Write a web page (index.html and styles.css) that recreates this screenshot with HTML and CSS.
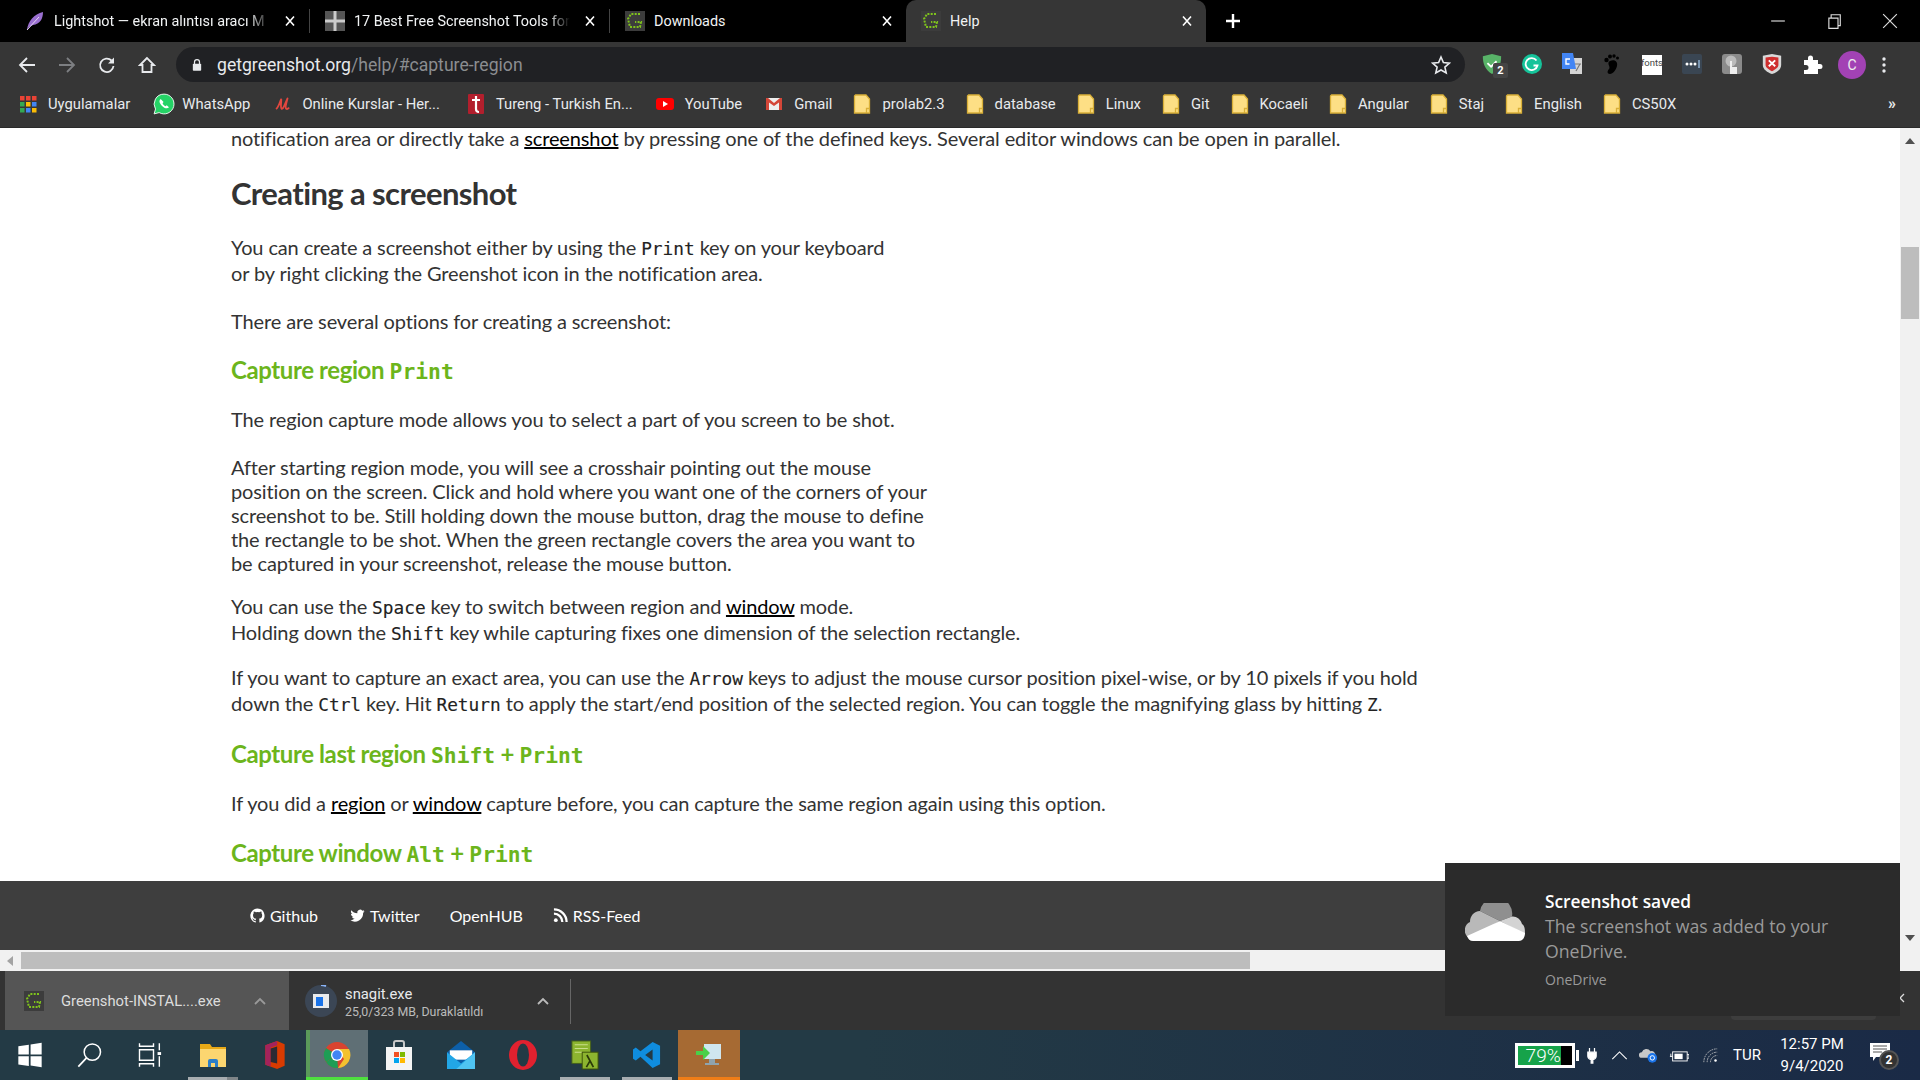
FILE: index.html
```html
<!DOCTYPE html>
<html lang="en">

<head>
    <meta charset="UTF-8">
    <meta name="viewport" content="width=device-width, initial-scale=1.0">
    <title>Help</title>
    <link rel="stylesheet" href="styles.css">
</head>

<body>
    <svg class="defs" width="0" height="0">
        <symbol id="folder" viewBox="0 0 18 20">
            <path d="M2.500 1h10.500l3.500 4v14h-15v-17z" fill="#fddf85" stroke="#d9b038" stroke-width="1.300"/>
            <path d="M16.500 14.500h-3v4.500" fill="none" stroke="#d9b038" stroke-width="1.300"/>
        </symbol>
        <symbol id="gshot" viewBox="0 0 20 20">
            <rect width="20" height="20" fill="#3c3c3c"/>
            <path d="M15 3H6L3 8l2 8h10l1-5h-6" fill="none" stroke="#7fc31c" stroke-width="2" stroke-dasharray="2 1.3"/>
        </symbol>
        <symbol id="closex" viewBox="0 0 12 12">
            <path d="M2 1.5l8 9M10 1.5l-8 9" stroke="#fff" stroke-width="1.6" fill="none"/>
        </symbol>
    </svg>

    <div class="tabstrip">
        <div class="tab">
            <svg class="tab-icon" viewBox="0 0 20 20"><path d="M2 19C3 10 9 3 18 1c0 7-3 12-10 13l-4 2z" fill="#9a6fd0"/><path d="M2 19L14 6" stroke="#e6d8f5" stroke-width="1"/></svg>
            <span class="tab-title tab-fade">Lightshot — ekran alıntısı aracı M</span>
            <svg class="tab-close"><use href="#closex"/></svg>
        </div>
        <div class="tab">
            <svg class="tab-icon" viewBox="0 0 20 20"><rect width="20" height="20" fill="#555"/><path d="M10 0v20M0 10h20" stroke="#ccc" stroke-width="3"/></svg>
            <span class="tab-title tab-fade">17 Best Free Screenshot Tools for</span>
            <svg class="tab-close"><use href="#closex"/></svg>
        </div>
        <div class="tab tab-noline">
            <svg class="tab-icon"><use href="#gshot"/></svg>
            <span class="tab-title">Downloads</span>
            <svg class="tab-close"><use href="#closex"/></svg>
        </div>
        <div class="tab tab-active">
            <svg class="tab-icon"><use href="#gshot"/></svg>
            <span class="tab-title">Help</span>
            <svg class="tab-close"><use href="#closex"/></svg>
        </div>
        <svg class="new-tab" viewBox="0 0 16 16"><path d="M8 1v14M1 8h14" stroke="#fff" stroke-width="2.4"/></svg>
        <div class="win-controls">
            <svg viewBox="0 0 14 14"><path d="M1 7h12" stroke="#ddd"/></svg>
            <svg viewBox="0 0 14 14"><path d="M2.5 4.5h8v9h-8zM4.5 4V1.5h8V11H11" fill="none" stroke="#ddd"/></svg>
            <svg viewBox="0 0 14 14"><path d="M1 1l12 12M13 1L1 13" stroke="#ddd"/></svg>
        </div>
    </div>

    <div class="toolbar">
        <div class="nav-btns">
            <svg viewBox="0 0 18 18"><path d="M17 9H2M9 2L2 9l7 7" fill="none" stroke="#e8eaed" stroke-width="1.800"/></svg>
            <svg viewBox="0 0 18 18"><path d="M1 9h15M9 2l7 7-7 7" fill="none" stroke="#7d7f82" stroke-width="1.800"/></svg>
            <svg viewBox="0 0 18 18"><path d="M15.500 10a6.700 6.700 0 1 1-2-5.500" fill="none" stroke="#e8eaed" stroke-width="1.800"/><path d="M16 1.500v6h-6z" fill="#e8eaed"/></svg>
            <svg viewBox="0 0 18 18"><path d="M9 2L2 9h2.500v7h9V9H16z" fill="none" stroke="#e8eaed" stroke-width="1.800"/></svg>
        </div>
        <div class="omnibox">
            <svg class="lock" viewBox="0 0 12 16"><path d="M3 7V4.500a3 3 0 0 1 6 0V7" fill="none" stroke="#e8eaed" stroke-width="1.500"/><rect x="1" y="6.500" width="10" height="8.500" rx="1" fill="#e8eaed"/></svg>
            <span class="url">getgreenshot.org<span class="url-path">/help/#capture-region</span></span>
            <svg class="star" viewBox="0 0 20 20"><path d="M10 2l2.400 5.500 6 .6-4.500 4 1.300 5.900L10 15l-5.200 3 1.300-5.900-4.500-4 6-.6z" fill="none" stroke="#e8eaed" stroke-width="1.600"/></svg>
        </div>
        <div class="ext-icons">
            <span class="ext">
                <svg viewBox="0 0 22 24"><path d="M1 3.500L11 1l10 2.500c0 9-3 15-10 19.500C4 18.500 1 12.500 1 3.500z" fill="#58b368"/><path d="M6 11l4 4 6-6" fill="none" stroke="#fff" stroke-width="2"/></svg>
                <span class="ext-badge">2</span>
            </span>
            <span class="ext"><svg viewBox="0 0 22 22"><circle cx="11" cy="11" r="10" fill="#15c39a"/><path d="M15.500 7.500a6 6 0 1 0 1 5h-4" fill="none" stroke="#fff" stroke-width="1.800"/></svg></span>
            <span class="ext"><svg viewBox="0 0 22 22"><rect x="9" y="5" width="12" height="16" fill="#d5d5d5"/><path d="M1 0h11l3 16H1z" fill="#4285f4"/><path d="M9 6H5v5h3.500" fill="none" stroke="#fff" stroke-width="1.400"/><path d="M14 11h6M15 18l4-7" stroke="#777" stroke-width="1.200"/></svg></span>
            <span class="ext"><svg viewBox="0 0 22 22"><path d="M9 8c5-2 8 1 7 5s-4 8-7 8-3-3-1-5-3-6 1-8z" fill="#000"/><circle cx="5.500" cy="7" r="2.200" fill="#000"/><circle cx="9" cy="3.500" r="2" fill="#000"/><circle cx="13" cy="3" r="1.700" fill="#000"/><circle cx="16.500" cy="5" r="1.500" fill="#000"/></svg></span>
            <span class="ext ext-fonts">fonts</span>
            <span class="ext"><svg viewBox="0 0 22 22"><rect x="1" y="1" width="20" height="20" rx="2" fill="#3a4653"/><circle cx="6" cy="11" r="1.500" fill="#fff"/><circle cx="10" cy="11" r="1.500" fill="#fff"/><circle cx="14" cy="11" r="1.500" fill="#fff"/><path d="M18 7v8" stroke="#8fb0d0" stroke-width="1.500"/></svg></span>
            <span class="ext"><svg viewBox="0 0 22 22"><rect x="1" y="1" width="20" height="20" rx="3" fill="#8b8b8b"/><circle cx="10" cy="8" r="5.500" fill="#bbb"/><path d="M9 8h2v6h5v7H9z" fill="#eee"/></svg></span>
            <span class="ext"><svg viewBox="0 0 22 24"><path d="M1 3l10-2 10 2v10c0 5-5 8-10 10-5-2-10-5-10-10z" fill="#d8d8d8"/><path d="M4 5l7-1 7 1v8c0 3-4 5-7 7-3-2-7-4-7-7z" fill="#cf2e2e"/><path d="M7.500 8l7 6.500M14.500 8l-7 6.500" stroke="#fff" stroke-width="2"/></svg></span>
            <span class="ext"><svg viewBox="0 0 22 22"><path d="M3 7h4V5a2.500 2.500 0 0 1 5 0v2h5v4h2a2.500 2.500 0 0 1 0 5h-2v5H3v-4h2a2.500 2.500 0 0 0 0-5H3z" fill="#fff"/></svg></span>
            <span class="avatar">C</span>
            <svg class="menu-dots" viewBox="0 0 4 18"><circle cx="2" cy="3" r="1.700" fill="#e8eaed"/><circle cx="2" cy="9" r="1.700" fill="#e8eaed"/><circle cx="2" cy="15" r="1.700" fill="#e8eaed"/></svg>
        </div>
    </div>

    <div class="bookmarks">
        <a class="bm">
            <svg class="bm-icon" viewBox="0 0 18 18"><g><rect x="1" y="1" width="4.500" height="4.500" fill="#ea4335"/><rect x="7" y="1" width="4.500" height="4.500" fill="#ea4335"/><rect x="13" y="1" width="4.500" height="4.500" fill="#ea4335"/><rect x="1" y="7" width="4.500" height="4.500" fill="#34a853"/><rect x="7" y="7" width="4.500" height="4.500" fill="#fbbc05"/><rect x="13" y="7" width="4.500" height="4.500" fill="#4285f4"/><rect x="1" y="13" width="4.500" height="4.500" fill="#34a853"/><rect x="7" y="13" width="4.500" height="4.500" fill="#4285f4"/><rect x="13" y="13" width="4.500" height="4.500" fill="#fbbc05"/></g></svg>
            Uygulamalar
        </a>
        <a class="bm">
            <svg class="bm-icon bm-wide" viewBox="0 0 20 20"><path d="M10 1a9 9 0 0 0-7.700 13.600L1 19l4.600-1.200A9 9 0 1 0 10 1z" fill="#25d366" stroke="#fff" stroke-width=".8"/><path d="M7 5.500c-2 1.500-1 4 1 6s5 3.500 6.500 1.500l-2-1.800-1.200.8c-1-.4-2.200-1.500-2.600-2.700l.9-1.200z" fill="#fff"/></svg>
            WhatsApp
        </a>
        <a class="bm bm-online">
            <svg class="bm-icon" viewBox="0 0 18 18"><path d="M3 14C6 12 7 6 8 4.500S7 12 8.500 13.500 12 9 14 4.500 11.500 12 13 13.500s3-1 3-1" fill="none" stroke="#e2473f" stroke-width="1.800"/></svg>
            Online Kurslar - Her...
        </a>
        <a class="bm">
            <svg class="bm-icon" viewBox="0 0 18 20"><rect x="1" y="0" width="16" height="20" rx="1" fill="#b21f2d"/><path d="M9 2v13q0 3 3 3M5 6h8" fill="none" stroke="#fff" stroke-width="2.200"/></svg>
            Tureng - Turkish En...
        </a>
        <a class="bm">
            <svg class="bm-icon" viewBox="0 0 18 18"><rect x="0" y="3" width="18" height="12" rx="3" fill="#f00"/><path d="M7 6l5 3-5 3z" fill="#fff"/></svg>
            YouTube
        </a>
        <a class="bm">
            <svg class="bm-icon" viewBox="0 0 18 18"><rect x="1" y="3" width="16" height="12" fill="#eee"/><path d="M1 3h2l6 5 6-5h2v12h-3V7.500L9 11 4 7.500V15H1z" fill="#d44638"/></svg>
            Gmail
        </a>
        <a class="bm bm-folder"><svg class="bm-icon"><use href="#folder"/></svg>prolab2.3</a>
        <a class="bm bm-folder"><svg class="bm-icon"><use href="#folder"/></svg>database</a>
        <a class="bm bm-folder"><svg class="bm-icon"><use href="#folder"/></svg>Linux</a>
        <a class="bm bm-folder"><svg class="bm-icon"><use href="#folder"/></svg>Git</a>
        <a class="bm bm-folder"><svg class="bm-icon"><use href="#folder"/></svg>Kocaeli</a>
        <a class="bm bm-folder"><svg class="bm-icon"><use href="#folder"/></svg>Angular</a>
        <a class="bm bm-folder"><svg class="bm-icon"><use href="#folder"/></svg>Staj</a>
        <a class="bm bm-folder"><svg class="bm-icon"><use href="#folder"/></svg>English</a>
        <a class="bm bm-folder"><svg class="bm-icon"><use href="#folder"/></svg>CS50X</a>
        <span class="bm-more">»</span>
    </div>

    <div class="viewport">
        <div class="page">
            <main class="content">
                <p class="first">notification area or directly take a <a href="#">screenshot</a> by pressing one of the defined keys. Several editor windows can be open in parallel.</p>

                <h2>Creating a screenshot</h2>
                <p>You can create a screenshot either by using the <kbd>Print</kbd> key on your keyboard<br>or by right clicking the Greenshot icon in the notification area.</p>
                <p>There are several options for creating a screenshot:</p>

                <h3>Capture region <kbd>Print</kbd></h3>
                <p class="gap-20">The region capture mode allows you to select a part of you screen to be shot.</p>
                <p>After starting region mode, you will see a crosshair pointing out the mouse<br>position on the screen. Click and hold where you want one of the corners of your<br>screenshot to be. Still holding down the mouse button, drag the mouse to define<br>the rectangle to be shot. When the green rectangle covers the area you want to<br>be captured in your screenshot, release the mouse button.</p>
                <p class="gap-19">You can use the <kbd>Space</kbd> key to switch between region and <a href="#">window</a> mode.<br>Holding down the <kbd>Shift</kbd> key while capturing fixes one dimension of the selection rectangle.</p>
                <p class="gap-19">If you want to capture an exact area, you can use the <kbd>Arrow</kbd> keys to adjust the mouse cursor position pixel-wise, or by 10 pixels if you hold<br>down the <kbd>Ctrl</kbd> key. Hit <kbd>Return</kbd> to apply the start/end position of the selected region. You can toggle the magnifying glass by hitting <kbd>Z</kbd>.</p>

                <h3>Capture last region <kbd>Shift</kbd> + <kbd>Print</kbd></h3>
                <p class="gap-20">If you did a <a href="#">region</a> or <a href="#">window</a> capture before, you can capture the same region again using this option.</p>

                <h3 class="h3-next">Capture window <kbd>Alt</kbd> + <kbd>Print</kbd></h3>
            </main>
            <footer class="site-footer">
                <a><svg viewBox="0 0 16 16"><path d="M8 .5a7.700 7.700 0 0 0-2.400 15c.4.100.5-.2.500-.4v-1.400c-2.100.5-2.600-.9-2.600-.9-.3-.9-.8-1.200-.8-1.200-.7-.5.100-.5.100-.5.800.100 1.200.8 1.200.8.700 1.200 1.800.8 2.200.6.100-.5.300-.8.500-1-1.700-.2-3.500-.9-3.500-3.800 0-.8.300-1.500.8-2-.1-.2-.3-1 .1-2 0 0 .6-.2 2.100.8a7.300 7.300 0 0 1 3.800 0c1.500-1 2.100-.8 2.100-.8.400 1 .2 1.800.1 2 .5.500.8 1.200.8 2 0 2.900-1.800 3.600-3.500 3.800.3.200.5.700.5 1.400v2.100c0 .2.100.5.500.4A7.700 7.700 0 0 0 8 .5z" fill="#fff"/></svg>Github</a>
                <a><svg viewBox="0 0 16 16"><path d="M15.500 3.200c-.6.300-1.200.4-1.800.5.600-.4 1.100-1 1.400-1.700-.6.400-1.300.6-2 .8a3.100 3.100 0 0 0-5.300 2.800C5.200 5.500 2.900 4.300 1.400 2.400c-.8 1.400-.4 3.200 1 4.100-.5 0-1-.2-1.400-.4 0 1.500 1.100 2.800 2.500 3.100-.5.100-.9.100-1.400 0 .4 1.200 1.500 2.100 2.900 2.100A6.300 6.300 0 0 1 .5 13.100 8.800 8.800 0 0 0 14 5.300c.6-.5 1.100-1.300 1.500-2.100z" fill="#fff"/></svg>Twitter</a>
                <a class="no-icon">OpenHUB</a>
                <a><svg viewBox="0 0 16 16"><circle cx="3" cy="13" r="2" fill="#fff"/><path d="M1 6a9 9 0 0 1 9 9M1 1.500A13.500 13.500 0 0 1 14.500 15" fill="none" stroke="#fff" stroke-width="2.400"/></svg>RSS-Feed</a>
            </footer>
            <div class="hscroll">
                <span class="arrow-left"></span>
                <div class="hscroll-thumb"></div>
            </div>
        </div>
        <div class="vscroll">
            <span class="arrow-up"></span>
            <div class="vscroll-thumb"></div>
            <span class="arrow-down"></span>
        </div>
    </div>

    <div class="downloads">
        <div class="dl dl-first">
            <svg class="dl-icon"><use href="#gshot"/></svg>
            <span class="dl-name">Greenshot-INSTAL....exe</span>
            <svg class="dl-caret" viewBox="0 0 12 8"><path d="M1 7l5-5 5 5" fill="none" stroke="#999" stroke-width="1.800"/></svg>
        </div>
        <div class="dl dl-second">
            <svg class="dl-progress" viewBox="0 0 32 32"><circle cx="16" cy="16" r="16" fill="#3b4655"/><rect x="8" y="9" width="16" height="14" fill="#e8eaed"/><rect x="11" y="12" width="7" height="9" fill="#1a73e8"/><path d="M16 0a16 16 0 0 1 5 1" stroke="#8ab4f8" stroke-width="2" fill="none"/></svg>
            <div class="dl-text">
                <span class="dl-name">snagit.exe</span>
                <span class="dl-status">25,0/323 MB, Duraklatıldı</span>
            </div>
            <svg class="dl-caret" viewBox="0 0 12 8"><path d="M1 7l5-5 5 5" fill="none" stroke="#bbb" stroke-width="1.800"/></svg>
        </div>
        <div class="show-all"></div>
        <svg class="dl-close" viewBox="0 0 10 10"><path d="M1 1l8 8M9 1L1 9" stroke="#ddd" stroke-width="1.300"/></svg>
    </div>

    <div class="taskbar">
        <div class="task-btns">
            <span class="task task-sys"><svg viewBox="0 0 24 24"><path d="M2 4.500l9-1.300V11.500H2zM12.500 3L22 1.500v10h-9.500zM2 13h9v8.500l-9-1.300zM12.500 13H22v9.500L12.500 21z" fill="#fff"/></svg></span>
            <span class="task task-sys"><svg viewBox="0 0 24 24"><circle cx="14" cy="9.500" r="7" fill="none" stroke="#fff" stroke-width="1.300"/><path d="M9 14.500L2 22" stroke="#fff" stroke-width="1.500"/></svg></span>
            <span class="task task-sys"><svg viewBox="0 0 24 24"><path d="M3 2v2.500h12V2M3 22v-2.500h12V22M3 7.500h12v9H3zM20 2v6M20 13v9" fill="none" stroke="#fff" stroke-width="1.200"/><rect x="18.500" y="9.500" width="3" height="2.500" fill="#fff"/></svg></span>
            <span class="task task-open task-stack"><svg viewBox="0 0 28 28"><path d="M1 3h10l2 3h14v20H1z" fill="#e8a917"/><path d="M1 8h26v18H1z" fill="#fcd670"/><path d="M9 26v-6a2 2 0 0 1 2-2h6a2 2 0 0 1 2 2v6h-3v-4h-4v4z" fill="#2d7fc7"/></svg></span>
            <span class="task"><svg viewBox="0 0 24 28"><path d="M14 1L3 5v18l11 4 7-3V4z" fill="#d83b01"/><path d="M14 1L3 5v18l5 1.700V7l6-2z" fill="#a3225c"/><path d="M8 8l6-2v16l-6-1.500z" fill="#2c2a33"/></svg></span>
            <span class="task task-active"><svg viewBox="0 0 28 28"><circle cx="14" cy="14" r="13" fill="#d9432f"/><path d="M14 14L3 21A13 13 0 0 1 3 7z" fill="#1e9d55"/><path d="M14 14l-11 7a13 13 0 0 0 12 6z" fill="#1e9d55"/><path d="M14 8h12a13 13 0 0 1-11 19l6-9z" fill="#f3c130"/><circle cx="14" cy="14" r="6" fill="#fff"/><circle cx="14" cy="14" r="4.700" fill="#4285f4"/></svg></span>
            <span class="task"><svg viewBox="0 0 26 30"><path d="M8 7V3a2 2 0 0 1 2-2h6a2 2 0 0 1 2 2v4" fill="none" stroke="#c8c8c8" stroke-width="2"/><rect x="0" y="7" width="26" height="23" fill="#f4f4f4"/><rect x="8" y="12" width="5" height="5" fill="#f25022"/><rect x="14" y="12" width="5" height="5" fill="#7fba00"/><rect x="8" y="18" width="5" height="5" fill="#00a4ef"/><rect x="14" y="18" width="5" height="5" fill="#ffb900"/></svg></span>
            <span class="task"><svg viewBox="0 0 30 30"><path d="M15 0L0 12v18h30V12z" fill="#0d5fa8"/><path d="M3 10h24v10H3z" fill="#fff"/><path d="M0 12l15 12 15-12v18H0z" fill="#22a6e6"/><path d="M30 12v18H10z" fill="#4fc4f2"/></svg></span>
            <span class="task"><svg viewBox="0 0 28 30"><ellipse cx="14" cy="15" rx="14" ry="15" fill="#e0212f"/><ellipse cx="14" cy="15" rx="6" ry="11.500" fill="#233a45"/></svg></span>
            <span class="task task-open"><svg viewBox="0 0 30 30"><rect x="1" y="0" width="20" height="24" fill="#8cb42f" stroke="#46601a"/><path d="M4 4h14M4 8h14M4 12h8" stroke="#c9de8a" stroke-width="1.200"/><rect x="12" y="12" width="17" height="18" fill="#8cb42f" stroke="#3c5209"/><path d="M17 15l7 13M20.500 21l-4 7" stroke="#2a3a08" stroke-width="1.800" fill="none"/></svg></span>
            <span class="task task-open"><svg viewBox="0 0 30 30"><path d="M21 1l8 4v20l-8 4-13-12-5 4-3-2v-10l3-2 5 4zM21 9l-8 6 8 6z" fill="#0f8ddf" fill-rule="evenodd"/></svg></span>
            <span class="task task-orange"><svg viewBox="0 0 28 28"><path d="M9 3h17v15H9z" fill="#cfe6ef"/><path d="M14 18h6v4h4v2H10v-2h4z" fill="#8fa3ad"/><path d="M1 10h7V5l7 7-7 7v-5H1z" fill="#4ad04a"/></svg></span>
        </div>
        <div class="tray">
            <div class="battery"><span class="battery-fill">79%</span></div>
            <svg class="tray-ic plug" viewBox="0 0 12 18"><path d="M3 0v5M9 0v5M1 5h10v5a5 5 0 0 1-4 4v4H5v-4a5 5 0 0 1-4-4z" fill="#fff" stroke="#fff" stroke-width="1.500"/></svg>
            <svg class="tray-ic chevron" viewBox="0 0 18 10"><path d="M1 9l8-8 8 8" fill="none" stroke="#fff" stroke-width="1.200"/></svg>
            <svg class="tray-ic od" viewBox="0 0 22 18"><path d="M4 12a3 3 0 0 1 0-6 5 5 0 0 1 9-1 4 4 0 0 1 5 5v2z" fill="#c8c8c8"/><circle cx="15" cy="12" r="5" fill="#1a73e8"/><circle cx="15" cy="12" r="2.300" fill="none" stroke="#fff"/></svg>
            <svg class="tray-ic bat" viewBox="0 0 22 14"><rect x="4" y="3" width="16" height="10" fill="none" stroke="#fff"/><rect x="6" y="5" width="9" height="6" fill="#fff"/><path d="M20 6h2v4h-2M1 8h3M2 5v3" stroke="#fff" fill="none"/></svg>
            <svg class="tray-ic wifi" viewBox="0 0 18 18"><path d="M1 17A16 16 0 0 1 17 1M5 17A12 12 0 0 1 17 5M9 17a8 8 0 0 1 8-8" fill="none" stroke="#ccc" stroke-dasharray="2 1"/><circle cx="15" cy="15" r="1.500" fill="#fff"/></svg>
            <span class="lang">TUR</span>
            <div class="clock"><span>12:57 PM</span><span>9/4/2020</span></div>
            <div class="action-center">
                <svg viewBox="0 0 20 18"><path d="M0 0h20v14H6l-3 4v-4H0z" fill="#fff"/><path d="M3 3h14M3 6h14M3 9h9" stroke="#555"/></svg>
                <span class="action-badge">2</span>
            </div>
        </div>
    </div>

    <div class="toast">
        <svg class="toast-icon" viewBox="0 0 60 38">
            <path d="M15 8A15.500 15.500 0 0 1 47 13.500L35 18z" fill="#8f8f8f"/>
            <path d="M15 8L35 18 5 35C-2 33-2 22 5 19 5 13 9 8 15 8z" fill="#b9b9b9"/>
            <path d="M35 18L47 13.500C51 13 56 16 57 21 60 23 60 27 60 31z" fill="#d3d3d3"/>
            <path d="M35 18L60 30C60 35 57 38 54 38H8C5 38 3 36 2 33z" fill="#fff"/>
        </svg>
        <div class="toast-body">
            <strong>Screenshot saved</strong>
            <span class="toast-msg">The screenshot was added to your OneDrive.</span>
            <span class="toast-app">OneDrive</span>
        </div>
    </div>
</body>

</html>
```

FILE: styles.css
```css
* {
    box-sizing: border-box;
}

html,
body {
    margin: 0;
    height: 100%;
}

body {
    display: flex;
    flex-direction: column;
    overflow: hidden;
    position: relative;
    font-family: "Lato", sans-serif;
}

.defs {
    position: absolute;
}

/* tab strip */
.tabstrip {
    height: 42px;
    background: #000;
    display: flex;
    align-items: stretch;
    padding-left: 10px;
    font: 14.4px "Roboto", sans-serif;
    color: #f1f3f4;
    flex-shrink: 0;
}

.tab {
    width: 300px;
    display: flex;
    align-items: center;
    padding: 0 13px 0 15px;
    position: relative;
    border-right: 1px solid #444;
    margin: 9px 0 9px;
}

.tab-noline {
    width: 296px;
    border-right: none;
}

.tab-active {
    margin: 0;
    border-right: none;
    background: #363636;
    border-radius: 10px 10px 0 0;
}

.tab-icon {
    width: 20px;
    height: 20px;
    flex-shrink: 0;
}

.tab-title {
    margin-left: 9px;
    flex: 1;
    white-space: nowrap;
    min-width: 0;
}

.tab-fade {
    -webkit-mask-image: linear-gradient(90deg, #000 90%, transparent 100%);
    mask-image: linear-gradient(90deg, #000 90%, transparent 100%);
}

.tab-close {
    width: 12px;
    height: 12px;
    margin-left: 14px;
    flex-shrink: 0;
}

.new-tab {
    width: 16px;
    height: 16px;
    align-self: center;
    margin-left: 19px;
}

.win-controls {
    margin-left: auto;
    display: flex;
    align-items: center;
    gap: 40px;
    padding-right: 22px;
}

.win-controls svg {
    width: 16px;
    height: 16px;
}

/* toolbar */
.toolbar {
    height: 46px;
    background: #363636;
    display: flex;
    align-items: center;
    flex-shrink: 0;
}

.nav-btns {
    display: flex;
    gap: 22px;
    padding-left: 18px;
    width: 176px;
}

.nav-btns svg {
    width: 18px;
    height: 18px;
}

.omnibox {
    width: 1289px;
    height: 35px;
    border-radius: 18px;
    background: #202124;
    display: flex;
    align-items: center;
    padding: 0 14px 0 16px;
    margin-top: -1px;
}

.lock {
    width: 10px;
    height: 14px;
}

.url {
    margin-left: 15px;
    font: 17.6px "Roboto", sans-serif;
    color: #e8eaed;
}

.url-path {
    color: #8b8d90;
}

.star {
    width: 20px;
    height: 20px;
    margin-left: auto;
}

.ext-icons {
    display: flex;
    align-items: center;
    margin-left: 7px;
}

.ext {
    width: 40px;
    height: 24px;
    display: flex;
    justify-content: center;
    position: relative;
}

.ext svg {
    width: 22px;
    height: 22px;
}

.ext-badge {
    position: absolute;
    left: 21px;
    top: 10px;
    width: 15px;
    height: 15px;
    background: #444;
    color: #fff;
    font: bold 11px/15px "Roboto", sans-serif;
    text-align: center;
    border-radius: 2px;
}

.ext-fonts {
    background: #fff;
    color: #444;
    width: 20px;
    height: 20px;
    margin: 0 10px;
    font: 9.5px/16px "Roboto", sans-serif;
}

.avatar {
    width: 28px;
    height: 28px;
    margin-left: 6px;
    border-radius: 50%;
    background: #a242b4;
    color: #eee;
    font: 14px/28px "Roboto", sans-serif;
    text-align: center;
}

.menu-dots {
    width: 4px;
    height: 18px;
    margin-left: 16px;
}

/* bookmarks */
.bookmarks {
    height: 40px;
    background: #363636;
    display: flex;
    align-items: center;
    gap: 23px;
    padding: 0 0 8px 19px;
    font: 14.8px "Roboto", sans-serif;
    color: #e8eaed;
    flex-shrink: 0;
    border-bottom: 1px solid #2a2a2a;
}

.bm {
    display: flex;
    align-items: center;
    white-space: nowrap;
}

.bm-icon {
    width: 18px;
    height: 20px;
    margin-right: 11px;
    flex-shrink: 0;
}

.bm-wide {
    width: 22px;
    height: 22px;
    margin-right: 7px;
}

.bm-online {
    margin-right: 4px;
}

.bm-folder {
    margin-left: -2px;
}

.bm-more {
    margin-left: auto;
    padding-right: 24px;
    font-size: 16px;
    font-weight: 700;
}

/* page */
.viewport {
    flex: 1;
    min-height: 0;
    display: flex;
    background: #fff;
}

.page {
    flex: 1;
    min-width: 0;
    display: flex;
    flex-direction: column;
}

.content {
    flex: 1;
    min-height: 0;
    overflow: hidden;
    padding-left: 231px;
    font-size: 20px;
    line-height: 24px;
    color: #333;
    letter-spacing: -0.13px;
}

.content p {
    margin: 24px 0 0;
    white-space: nowrap;
}

.content p.first {
    margin-top: 0;
    line-height: 20px;
}

.content p.gap-20 {
    margin-top: 20px;
}

.content p.gap-19 {
    margin-top: 19px;
}

.content a {
    color: #000;
    text-decoration: underline;
}

.content h2 {
    margin: 27px 0 0;
    font-size: 31px;
    line-height: 36px;
    font-weight: 700;
    color: #333;
    letter-spacing: -0.6px;
}

.content h3 {
    margin: 22px 0 0;
    font-size: 24px;
    line-height: 30px;
    font-weight: 700;
    color: #6cb51c;
    letter-spacing: -0.4px;
}

.content h3.h3-next {
    margin-top: 23px;
}

kbd {
    font-family: "DejaVu Sans Mono", monospace;
    font-size: 17.8px;
    letter-spacing: 0;
    color: #222;
    -webkit-text-stroke: 0.15px #222;
}

h3 kbd {
    font-size: 21.3px;
    font-weight: 700;
    color: #6cb51c;
    -webkit-text-stroke: 0;
}

.site-footer {
    height: 69px;
    flex-shrink: 0;
    background: #3e3e3e;
    color: #fff;
    display: flex;
    align-items: center;
    padding-left: 250px;
    gap: 30px;
    font-size: 16px;
}

.site-footer a {
    display: flex;
    align-items: center;
    gap: 5px;
}

.site-footer a:first-child {
    margin-right: 2px;
}

.site-footer svg {
    width: 15px;
    height: 15px;
}

.hscroll {
    height: 21px;
    flex-shrink: 0;
    background: #f1f1f1;
    display: flex;
    align-items: center;
}

.arrow-left {
    width: 0;
    height: 0;
    margin: 0 6px 0 7px;
    border: 5px solid transparent;
    border-left: 0;
    border-right: 6px solid #a3a3a3;
}

.hscroll-thumb {
    width: 1229px;
    height: 17px;
    margin-left: 2px;
    background: #bdbdbd;
}

.vscroll {
    width: 20px;
    background: #f1f1f1;
    display: flex;
    flex-direction: column;
    align-items: center;
}

.arrow-up,
.arrow-down {
    width: 0;
    height: 0;
    border: 5px solid transparent;
    border-top: 0;
    border-bottom: 6px solid #505050;
    margin-top: 10px;
}

.arrow-down {
    border-bottom: 0;
    border-top: 6px solid #505050;
    margin: auto 0 30px;
}

.vscroll-thumb {
    width: 18px;
    height: 72px;
    margin-top: 103px;
    background: #bdbdbd;
}

/* download shelf */
.downloads {
    height: 59px;
    flex-shrink: 0;
    background: #333;
    display: flex;
    align-items: center;
    padding-left: 5px;
    color: #e8eaed;
    font: 14.8px "Roboto", sans-serif;
    position: relative;
}

.dl {
    display: flex;
    align-items: center;
    height: 100%;
}

.dl-first {
    width: 284px;
    background: #555;
    padding-left: 19px;
    color: #ddd;
}

.dl-second {
    width: 282px;
    padding-left: 16px;
    position: relative;
}

.dl-second::after {
    content: "";
    position: absolute;
    right: 0;
    top: 8px;
    bottom: 6px;
    border-right: 1px solid #666;
}

.dl-icon {
    width: 20px;
    height: 20px;
}

.dl-first .dl-name {
    margin-left: 17px;
    flex: 1;
}

.dl-progress {
    width: 32px;
    height: 32px;
}

.dl-text {
    margin-left: 8px;
    padding-top: 3px;
    flex: 1;
    display: flex;
    flex-direction: column;
    gap: 1px;
}

.dl-status {
    font-size: 12.4px;
    color: #bbb;
}

.dl-caret {
    width: 12px;
    height: 8px;
    margin-right: 22px;
}

.dl-first .dl-caret {
    margin-right: 23px;
}

.show-all {
    position: absolute;
    left: 1731px;
    width: 145px;
    top: 40px;
    height: 9px;
    background: #3d3d3d;
    border-radius: 0 0 4px 4px;
}

.dl-close {
    position: absolute;
    right: 15px;
    top: 22px;
    width: 10px;
    height: 10px;
}

/* taskbar */
.taskbar {
    height: 50px;
    flex-shrink: 0;
    background: linear-gradient(90deg, #233a45 0%, #233a45 45%, #1a2a46 100%);
    display: flex;
    justify-content: space-between;
    color: #fff;
    font: 14px "Roboto", sans-serif;
}

.task-btns {
    display: flex;
}

.task {
    width: 62px;
    height: 50px;
    display: flex;
    align-items: center;
    justify-content: center;
    position: relative;
}

.task-sys {
    width: 60px;
}

.task-sys:nth-child(3) {
    margin-right: 2px;
}

.task svg {
    width: 28px;
    height: 30px;
}

.task-open::after,
.task-active::after,
.task-orange::after {
    content: "";
    position: absolute;
    left: 6px;
    right: 6px;
    bottom: 0;
    height: 3px;
    background: #a8adb0;
}

.task-stack::after {
    background: linear-gradient(90deg, #a8adb0 78%, #7f8588 78%);
}

.task-active {
    background: #5f6f75;
    border-left: 4px solid #5a9a5a;
}

.task-active svg {
    margin-left: -4px;
}

.task-active::after {
    left: -4px;
    right: 0;
    background: #4fe03f;
}

.task-orange {
    background: #a66a33;
}

.task-orange::after {
    left: 0;
    right: 0;
    background: #ef7d17;
}

.tray {
    display: flex;
    align-items: center;
    padding-right: 19px;
    position: relative;
}

.battery {
    width: 60px;
    height: 25px;
    border: 3px solid #fff;
    background: #000;
    position: relative;
    margin-right: 8px;
}

.battery::after {
    content: "";
    position: absolute;
    right: -7px;
    top: 4px;
    width: 3px;
    height: 11px;
    background: #fff;
}

.battery-fill {
    display: block;
    width: 79%;
    height: 100%;
    background: #16a34a;
    font-size: 19px;
    line-height: 19px;
    font-weight: 300;
    text-align: right;
    white-space: nowrap;
}

.tray-ic {
    flex-shrink: 0;
}

.plug {
    width: 10px;
    height: 17px;
    margin-left: 4px;
}

.chevron {
    width: 17px;
    height: 9px;
    margin-left: 14px;
}

.od {
    width: 21px;
    height: 18px;
    margin-left: 10px;
}

.bat {
    width: 20px;
    height: 13px;
    margin-left: 10px;
}

.wifi {
    width: 15px;
    height: 15px;
    margin-left: 14px;
}

.lang {
    font-size: 15px;
    margin-left: 15px;
}

.clock {
    display: flex;
    flex-direction: column;
    align-items: center;
    gap: 6px;
    margin-left: 17px;
    font-size: 15px;
    line-height: 16px;
    width: 68px;
}

.action-center {
    width: 32px;
    height: 32px;
    margin-left: 23px;
    position: relative;
}

.action-center svg {
    width: 20px;
    height: 18px;
    position: absolute;
    left: 1px;
    top: 4px;
}

.action-badge {
    position: absolute;
    left: 10px;
    top: 11px;
    width: 20px;
    height: 20px;
    border: 2px solid #555;
    border-radius: 50%;
    background: #333;
    font: bold 12px/16px "Roboto", sans-serif;
    text-align: center;
}

/* onedrive toast */
.toast {
    position: absolute;
    left: 1445px;
    top: 863px;
    width: 455px;
    height: 153px;
    background: #2b2b2b;
    display: flex;
    padding: 26px 30px 0 20px;
    font-family: "Open Sans", sans-serif;
}

.toast-icon {
    width: 60px;
    height: 38px;
    margin-top: 14px;
    flex-shrink: 0;
}

.toast-body {
    margin-left: 20px;
    display: flex;
    flex-direction: column;
}

.toast-body strong {
    color: #fff;
    font-size: 17.3px;
    line-height: 25px;
    font-weight: 600;
}

.toast-msg {
    color: #9a9a9a;
    font-size: 17.7px;
    line-height: 25px;
}

.toast-app {
    margin-top: 6px;
    color: #9a9a9a;
    font-size: 14px;
    line-height: 20px;
}
```
